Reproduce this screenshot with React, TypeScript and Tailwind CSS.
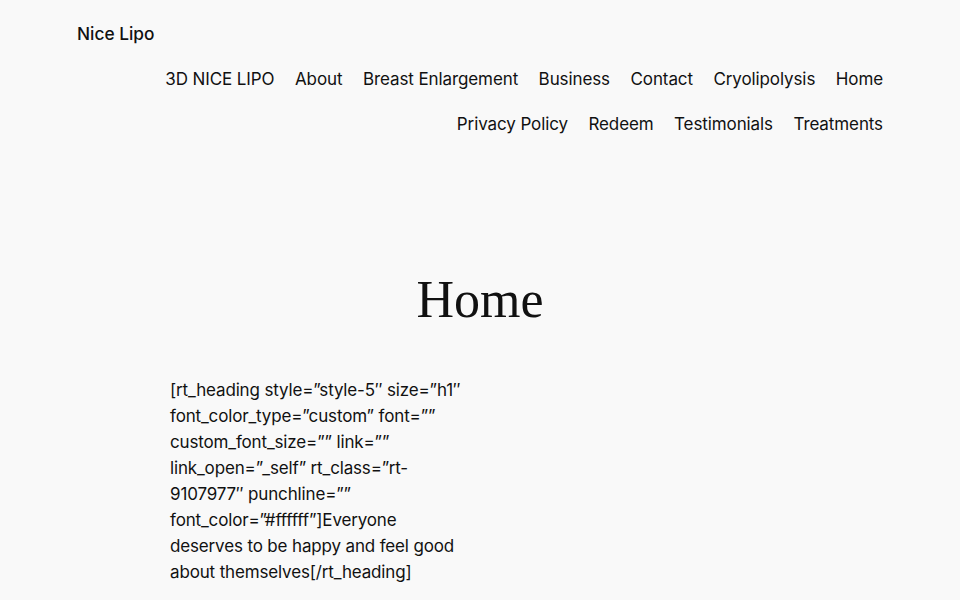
import React from 'react';

const navItems = [
  '3D NICE LIPO',
  'About',
  'Breast Enlargement',
  'Business',
  'Contact',
  'Cryolipolysis',
  'Home',
  'Privacy Policy',
  'Redeem',
  'Testimonials',
  'Treatments',
];

const shortcode =
  '[rt_heading style=\u201dstyle-5\u2033 size=\u201dh1\u2033 font_color_type=\u201dcustom\u201d font=\u201d\u201d custom_font_size=\u201d\u201d link=\u201d\u201d link_open=\u201d_self\u201d rt_class=\u201drt-9107977\u2033 punchline=\u201d\u201d font_color=\u201d#ffffff\u201d]Everyone deserves to be happy and feel good about themselves[/rt_heading]';

export default function App() {
  return (
    <div
      className="min-h-[600px] w-full bg-[#f9f9f9] text-[#111111]"
      style={{ fontFamily: 'Inter, "Liberation Sans", sans-serif' }}
    >
      <header className="px-[77px] pt-[20px]">
        <div className="text-[17.3px] font-medium leading-[27px]">Nice Lipo</div>
        <nav className="mt-[19px] flex flex-wrap justify-end gap-x-[20.5px] gap-y-[18px]">
          {navItems.map((item) => (
            <a key={item} className="text-[17px] leading-[27px] tracking-[-0.1px] whitespace-nowrap">
              {item}
            </a>
          ))}
        </nav>
      </header>

      <main className="mt-[132px]">
        <h1
          className="text-center text-[52px] leading-[60px] font-normal"
          style={{ fontFamily: '"Liberation Serif", "DejaVu Serif", serif' }}
        >
          Home
        </h1>
        <div className="mx-auto mt-[47px] w-[620px]">
          <p className="w-[300px] text-[17px] leading-[26px] tracking-[-0.15px]">{shortcode}</p>
        </div>
      </main>
    </div>
  );
}
